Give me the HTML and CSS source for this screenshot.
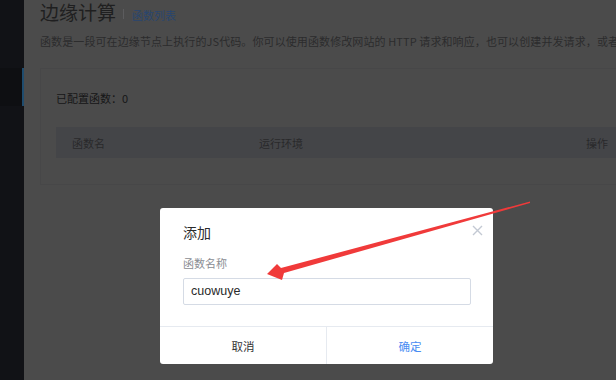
FILE: index.html
```html
<!DOCTYPE html>
<html lang="zh-CN">
<head>
    <meta charset="UTF-8">
    <title>边缘计算</title>
    <link rel="stylesheet" href="styles.css">
</head>
<body>
    <div class="sidebar">
        <div class="nav-item active"></div>
    </div>
    <div class="main">
        <div class="page-head">
            <h1>边缘计算</h1>
            <span class="sep"></span>
            <a class="crumb">函数列表</a>
        </div>
        <p class="desc">函数是一段可在边缘节点上执行的JS代码。你可以使用函数修改网站的 HTTP 请求和响应，也可以创建并发请求，或者在边缘</p>
        <div class="card">
            <div class="count">已配置函数：0</div>
            <div class="table-head">
                <span class="col-name">函数名</span>
                <span class="col-env">运行环境</span>
                <span class="col-op">操作</span>
            </div>
        </div>
    </div>

    <!-- dialog -->
    <div class="dialog">
        <div class="dialog-body">
            <h3>添加</h3>
            <span class="close">
                <svg width="11" height="11" viewBox="0 0 11 11"><path d="M1 1L10 10M10 1L1 10" stroke="#c3c9d3" stroke-width="1.4" fill="none"/></svg>
            </span>
            <label class="field-label">函数名称</label>
            <div class="input">cuowuye</div>
        </div>
        <div class="dialog-foot">
            <button class="btn">取消</button>
            <button class="btn primary">确定</button>
        </div>
    </div>

    <!-- red annotation arrow -->
    <svg class="arrow" width="616" height="380" viewBox="0 0 616 380">
        <polygon points="530,201.5 530,203 284,273 282,280 267,274 277,264 281,268" fill="#f03a3a"/>
    </svg>
</body>
</html>
```
FILE: styles.css
```css
* {
    margin: 0;
    padding: 0;
    box-sizing: border-box;
}

body {
    font-family: "Noto Sans CJK SC", "Liberation Sans", sans-serif;
    width: 616px;
    height: 380px;
    overflow: hidden;
    display: flex;
    background: #4b4b4b;
    position: relative;
}

/* left nav */
.sidebar {
    width: 24px;
    flex-shrink: 0;
    background: #111216;
    padding-top: 68px;
}

.nav-item {
    height: 38px;
}

.nav-item.active {
    background: #0e0f12;
    border-right: 2px solid #1f4c6e;
}

.main {
    flex: 1;
    min-width: 0;
    overflow: hidden;
    padding-left: 16px;
}

.page-head {
    display: flex;
    align-items: center;
    height: 24px;
}

.page-head h1 {
    font-size: 19px;
    line-height: 22px;
    font-weight: normal;
    color: #1f1f20;
}

.sep {
    width: 1px;
    height: 10px;
    background: #5c5c5e;
    margin: 4px 8px 0 7px;
}

.crumb {
    font-size: 11px;
    line-height: 14px;
    color: #29466f;
    margin-top: 5px;
}

.desc {
    font-size: 11px;
    color: #2c2c2d;
    white-space: nowrap;
    letter-spacing: 0.1px;
    margin-top: 9px;
    line-height: 16px;
}

.card {
    margin-top: 19px;
    border: 1px solid #474748;
    border-right: none;
    height: 117px;
    padding: 21px 0 0 15px;
}

.count {
    font-size: 11px;
    color: #161617;
    line-height: 16px;
}

.table-head {
    margin-top: 21px;
    height: 31px;
    background: #444548;
    display: flex;
    align-items: center;
    font-size: 11px;
    color: #29292b;
}

.col-name {
    margin-left: 16px;
    width: 187px;
}

.col-env {
    width: 327px;
}

/* dialog */
.dialog {
    position: absolute;
    left: 160px;
    top: 208px;
    width: 333px;
    height: 156px;
    background: #fff;
    border-radius: 3px;
    display: flex;
    flex-direction: column;
}

.dialog-body {
    flex: 1;
    padding: 14px 22px 0 23px;
    position: relative;
}

.dialog-body h3 {
    font-size: 14px;
    font-weight: normal;
    color: #2b2b2b;
    line-height: 20px;
}

.close {
    position: absolute;
    right: 10px;
    top: 9px;
}

.field-label {
    display: block;
    font-size: 11px;
    color: #8a8d93;
    margin-top: 14px;
    line-height: 14px;
}

.input {
    margin-top: 8px;
    height: 27px;
    border: 1px solid #d5dbe5;
    border-radius: 2px;
    padding-left: 7px;
    font-family: "Liberation Sans", sans-serif;
    font-size: 12.5px;
    line-height: 25px;
    color: #2a2a2a;
}

.dialog-foot {
    height: 38px;
    border-top: 1px solid #e6eaf0;
    display: flex;
}

.btn {
    flex: 1;
    border: none;
    background: none;
    font-family: inherit;
    font-size: 11.5px;
    color: #333;
}

.btn + .btn {
    border-left: 1px solid #e6eaf0;
}

.btn.primary {
    color: #4a8cf2;
}

.arrow {
    position: absolute;
    left: 0;
    top: 0;
}
```
